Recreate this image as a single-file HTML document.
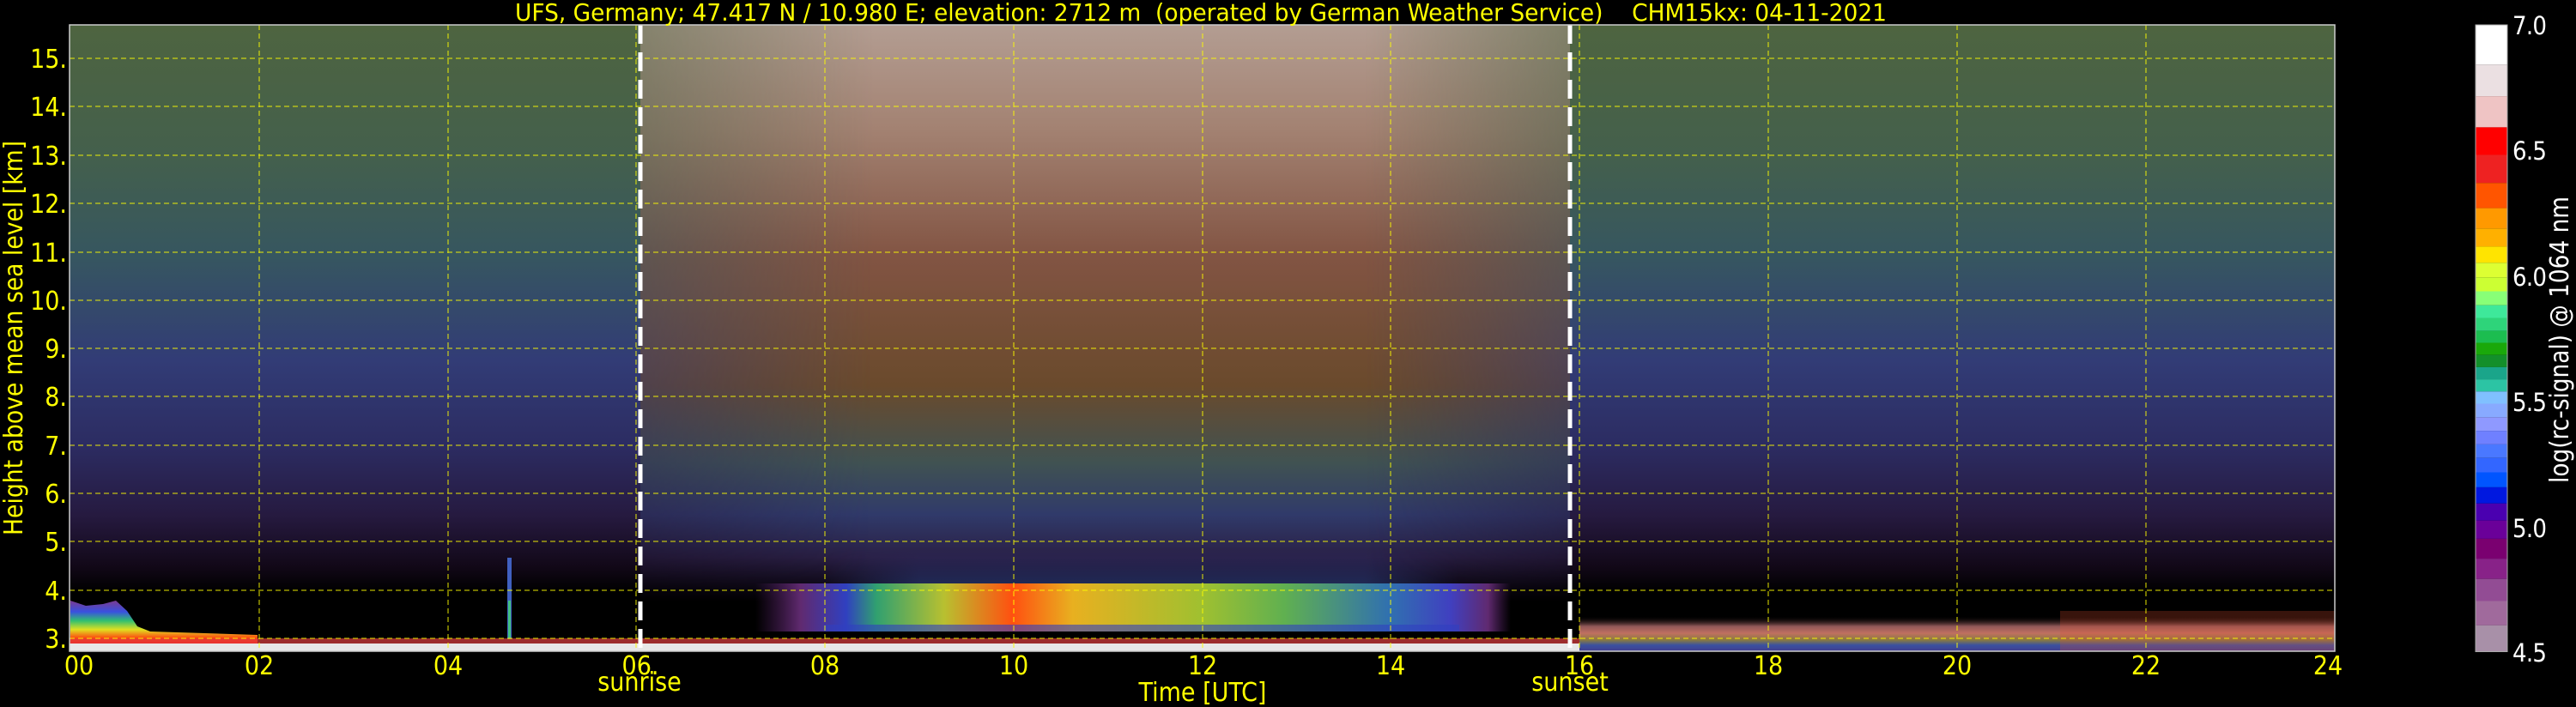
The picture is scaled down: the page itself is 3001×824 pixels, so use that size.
<!DOCTYPE html>
<html><head><meta charset="utf-8"><style>
html,body{margin:0;padding:0;background:#000;width:3001px;height:824px;overflow:hidden}
svg{display:block}
text{font-family:"DejaVu Sans Condensed","DejaVu Sans","Liberation Sans",sans-serif}
</style></head><body>
<svg width="3001" height="824" viewBox="0 0 3001 824" xmlns="http://www.w3.org/2000/svg">
<defs>
<linearGradient id="night" x1="0" y1="29" x2="0" y2="759" gradientUnits="userSpaceOnUse">
<stop offset="0" stop-color="#4e6440"/>
<stop offset="0.207" stop-color="#44604c"/>
<stop offset="0.37" stop-color="#365660"/>
<stop offset="0.535" stop-color="#323c76"/>
<stop offset="0.672" stop-color="#2c2c62"/>
<stop offset="0.782" stop-color="#261a40"/>
<stop offset="0.864" stop-color="#120818"/>
<stop offset="0.905" stop-color="#000"/>
<stop offset="1" stop-color="#000"/>
</linearGradient>
<linearGradient id="day" x1="0" y1="29" x2="0" y2="759" gradientUnits="userSpaceOnUse">
<stop offset="0" stop-color="#b39d92"/>
<stop offset="0.166" stop-color="#a38272"/>
<stop offset="0.37" stop-color="#825443"/>
<stop offset="0.576" stop-color="#6a4a2c"/>
<stop offset="0.70" stop-color="#405252"/>
<stop offset="0.782" stop-color="#303a6a"/>
<stop offset="0.85" stop-color="#2a2045"/>
<stop offset="0.905" stop-color="#0a0510"/>
<stop offset="0.92" stop-color="#000"/>
<stop offset="1" stop-color="#000"/>
</linearGradient>
<linearGradient id="dayMaskG" x1="746" y1="0" x2="1829" y2="0" gradientUnits="userSpaceOnUse">
<stop offset="0" stop-color="#fff" stop-opacity="0.55"/>
<stop offset="0.25" stop-color="#fff" stop-opacity="1"/>
<stop offset="0.78" stop-color="#fff" stop-opacity="1"/>
<stop offset="1" stop-color="#fff" stop-opacity="0.5"/>
</linearGradient>
<mask id="dayMask"><rect x="746" y="29" width="1083" height="730" fill="url(#dayMaskG)"/></mask>
<linearGradient id="bl" x1="880" y1="0" x2="1760" y2="0" gradientUnits="userSpaceOnUse">
<stop offset="0" stop-color="#502060" stop-opacity="0"/>
<stop offset="0.06" stop-color="#602a70"/>
<stop offset="0.12" stop-color="#3040c0"/>
<stop offset="0.16" stop-color="#30a070"/>
<stop offset="0.25" stop-color="#b8c030"/>
<stop offset="0.34" stop-color="#ff5010"/>
<stop offset="0.42" stop-color="#e8b020"/>
<stop offset="0.59" stop-color="#a0c030"/>
<stop offset="0.70" stop-color="#60b050"/>
<stop offset="0.84" stop-color="#3070b0"/>
<stop offset="0.92" stop-color="#4040c0"/>
<stop offset="0.97" stop-color="#602a70"/>
<stop offset="1" stop-color="#502060" stop-opacity="0"/>
</linearGradient>
<linearGradient id="blTop" x1="0" y1="640" x2="0" y2="690" gradientUnits="userSpaceOnUse">
<stop offset="0" stop-color="#3040a0" stop-opacity="0"/>
<stop offset="1" stop-color="#3a60b0" stop-opacity="0.8"/>
</linearGradient>
<linearGradient id="blTopH" x1="960" y1="0" x2="1700" y2="0" gradientUnits="userSpaceOnUse">
<stop offset="0" stop-color="#fff" stop-opacity="0"/>
<stop offset="0.15" stop-color="#fff" stop-opacity="1"/>
<stop offset="0.85" stop-color="#fff" stop-opacity="1"/>
<stop offset="1" stop-color="#fff" stop-opacity="0"/>
</linearGradient>
<mask id="blMask"><rect x="960" y="640" width="740" height="52" fill="url(#blTopH)"/></mask>
<linearGradient id="eve" x1="0" y1="718" x2="0" y2="758" gradientUnits="userSpaceOnUse">
<stop offset="0" stop-color="#000" stop-opacity="0"/>
<stop offset="0.3" stop-color="#905858"/>
<stop offset="0.5" stop-color="#c07060"/>
<stop offset="0.7" stop-color="#8a7a40"/>
<stop offset="0.85" stop-color="#3a50a0"/>
<stop offset="1" stop-color="#404090"/>
</linearGradient>
<linearGradient id="bump" x1="0" y1="700" x2="0" y2="752" gradientUnits="userSpaceOnUse">
<stop offset="0" stop-color="#7a3a90"/>
<stop offset="0.25" stop-color="#3a50e0"/>
<stop offset="0.45" stop-color="#30c070"/>
<stop offset="0.65" stop-color="#e0e020"/>
<stop offset="0.85" stop-color="#ff4010"/>
<stop offset="1" stop-color="#ff0000"/>
</linearGradient>
</defs>

<rect x="81" y="29" width="2639" height="730" fill="url(#night)"/>
<rect x="746" y="29" width="1083" height="730" fill="url(#day)" mask="url(#dayMask)"/>

<rect x="960" y="640" width="740" height="52" fill="url(#blTop)" opacity="0.6" mask="url(#blMask)"/>
<rect x="880" y="680" width="880" height="56" fill="url(#bl)"/>
<rect x="960" y="728" width="740" height="8" fill="#3040c0" opacity="0.6"/>

<path d="M82,700 L100,706 L120,704 L135,700 L148,712 L160,730 L175,736 L300,740 L300,752 L82,752 Z" fill="url(#bump)"/>
<rect x="591" y="650" width="5" height="95" fill="#4060c0"/>
<rect x="592" y="700" width="3" height="45" fill="#40c080"/>

<rect x="81" y="744" width="1760" height="6" fill="#e04040" opacity="0.7"/>
<rect x="81" y="750" width="1760" height="9" fill="#e8e8e8"/>
<rect x="1840" y="718" width="880" height="41" fill="url(#eve)"/>
<rect x="2400" y="712" width="320" height="47" fill="#e05030" opacity="0.25"/>

<g stroke="#ffff00" stroke-width="1" stroke-dasharray="6,4" fill="none" opacity="0.9">
<line x1="81" y1="68" x2="2720" y2="68"/>
<line x1="81" y1="124" x2="2720" y2="124"/>
<line x1="81" y1="181" x2="2720" y2="181"/>
<line x1="81" y1="237" x2="2720" y2="237"/>
<line x1="81" y1="294" x2="2720" y2="294"/>
<line x1="81" y1="350" x2="2720" y2="350"/>
<line x1="81" y1="406" x2="2720" y2="406"/>
<line x1="81" y1="462" x2="2720" y2="462"/>
<line x1="81" y1="519" x2="2720" y2="519"/>
<line x1="81" y1="575" x2="2720" y2="575"/>
<line x1="81" y1="631" x2="2720" y2="631"/>
<line x1="81" y1="688" x2="2720" y2="688"/>
<line x1="81" y1="744" x2="2720" y2="744"/>
<line x1="302" y1="29" x2="302" y2="759"/>
<line x1="522" y1="29" x2="522" y2="759"/>
<line x1="741" y1="29" x2="741" y2="759"/>
<line x1="961" y1="29" x2="961" y2="759"/>
<line x1="1181" y1="29" x2="1181" y2="759"/>
<line x1="1401" y1="29" x2="1401" y2="759"/>
<line x1="1620" y1="29" x2="1620" y2="759"/>
<line x1="1840" y1="29" x2="1840" y2="759"/>
<line x1="2060" y1="29" x2="2060" y2="759"/>
<line x1="2280" y1="29" x2="2280" y2="759"/>
<line x1="2500" y1="29" x2="2500" y2="759"/>
</g>
<g stroke="#ffffff" stroke-width="5" stroke-dasharray="22,10">
<line x1="746" y1="29" x2="746" y2="759"/>
<line x1="1829" y1="29" x2="1829" y2="759"/>
</g>
<rect x="81" y="29" width="2639" height="730" fill="none" stroke="#cccccc" stroke-width="1.5"/>

<text x="600" y="24" font-size="28" fill="#ffff00" textLength="1598" lengthAdjust="spacingAndGlyphs" xml:space="preserve">UFS, Germany; 47.417 N / 10.980 E; elevation: 2712 m  (operated by German Weather Service)    CHM15kx: 04-11-2021</text>

<g font-size="30" fill="#ffff00" text-anchor="end">
<text x="78" y="79">15.</text><text x="78" y="135">14.</text><text x="78" y="192">13.</text>
<text x="78" y="248">12.</text><text x="78" y="305">11.</text><text x="78" y="361">10.</text>
<text x="78" y="417">9.</text><text x="78" y="473">8.</text><text x="78" y="530">7.</text>
<text x="78" y="586">6.</text><text x="78" y="642">5.</text><text x="78" y="699">4.</text>
<text x="78" y="755">3.</text>
</g>
<text transform="translate(26,394) rotate(-90)" font-size="30" fill="#ffff00" text-anchor="middle" textLength="460" lengthAdjust="spacingAndGlyphs">Height above mean sea level [km]</text>

<g font-size="30" fill="#ffff00" text-anchor="middle">
<text x="92" y="786">00</text><text x="302" y="786">02</text><text x="522" y="786">04</text>
<text x="746" y="786">06.</text><text x="961" y="786">08</text><text x="1181" y="786">10</text>
<text x="1401" y="786">12</text><text x="1620" y="786">14</text><text x="1840" y="786">16</text>
<text x="2060" y="786">18</text><text x="2280" y="786">20</text><text x="2500" y="786">22</text>
<text x="2712" y="786">24</text>
<text x="745" y="805">sunrise</text>
<text x="1829" y="805">sunset</text>
<text x="1401" y="817">Time [UTC]</text>
</g>

<g>
<rect x="2884" y="29" width="37" height="46.3" fill="#ffffff"/>
<rect x="2884" y="75.3" width="37" height="36.8" fill="#ebe0e2"/>
<rect x="2884" y="112.1" width="37" height="36.3" fill="#efc4c4"/>
<rect x="2884" y="148.4" width="37" height="32.1" fill="#ff0000"/>
<rect x="2884" y="180.5" width="37" height="32.7" fill="#ee2222"/>
<rect x="2884" y="213.2" width="37" height="29.4" fill="#ff5500"/>
<rect x="2884" y="242.6" width="37" height="23.7" fill="#ff9900"/>
<rect x="2884" y="266.3" width="37" height="21.1" fill="#ffb000"/>
<rect x="2884" y="287.4" width="37" height="18.9" fill="#ffe400"/>
<rect x="2884" y="306.3" width="37" height="16.9" fill="#ddff33"/>
<rect x="2884" y="323.2" width="37" height="16.3" fill="#ccff33"/>
<rect x="2884" y="339.5" width="37" height="16.3" fill="#88ff77"/>
<rect x="2884" y="355.8" width="37" height="14.7" fill="#3ee89a"/>
<rect x="2884" y="370.5" width="37" height="15.3" fill="#2ed47a"/>
<rect x="2884" y="385.8" width="37" height="13.7" fill="#1cbd50"/>
<rect x="2884" y="399.5" width="37" height="14.2" fill="#1aa80a"/>
<rect x="2884" y="413.7" width="37" height="14.2" fill="#138f2a"/>
<rect x="2884" y="427.9" width="37" height="14.2" fill="#1aa58a"/>
<rect x="2884" y="442.1" width="37" height="14.2" fill="#2cc4a4"/>
<rect x="2884" y="456.3" width="37" height="14.2" fill="#80c0ff"/>
<rect x="2884" y="470.5" width="37" height="15.8" fill="#88aaff"/>
<rect x="2884" y="486.3" width="37" height="15.8" fill="#8f99ff"/>
<rect x="2884" y="502.1" width="37" height="15.8" fill="#6f80ff"/>
<rect x="2884" y="517.9" width="37" height="15.8" fill="#4a78ff"/>
<rect x="2884" y="533.7" width="37" height="16.8" fill="#3366ff"/>
<rect x="2884" y="550.5" width="37" height="17.4" fill="#0055ff"/>
<rect x="2884" y="567.9" width="37" height="18.9" fill="#0018e0"/>
<rect x="2884" y="586.8" width="37" height="20" fill="#4a00b0"/>
<rect x="2884" y="606.8" width="37" height="21.1" fill="#6a0099"/>
<rect x="2884" y="627.9" width="37" height="23.2" fill="#7a0070"/>
<rect x="2884" y="651.1" width="37" height="23.6" fill="#882288"/>
<rect x="2884" y="674.7" width="37" height="25.8" fill="#924c94"/>
<rect x="2884" y="700.5" width="37" height="28.4" fill="#a06a9c"/>
<rect x="2884" y="728.9" width="37" height="30.6" fill="#a890a8"/>
<rect x="2884" y="29" width="37" height="730.5" fill="none" stroke="#aaaaaa" stroke-width="1"/>
</g>
<g font-size="29" fill="#ffffff">
<text x="2927" y="40" textLength="40" lengthAdjust="spacing">7.0</text>
<text x="2927" y="186" textLength="40" lengthAdjust="spacing">6.5</text>
<text x="2927" y="333" textLength="40" lengthAdjust="spacing">6.0</text>
<text x="2927" y="479" textLength="40" lengthAdjust="spacing">5.5</text>
<text x="2927" y="626" textLength="40" lengthAdjust="spacing">5.0</text>
<text x="2927" y="771" textLength="40" lengthAdjust="spacing">4.5</text>
</g>
<text transform="translate(2992,396) rotate(-90)" font-size="30" fill="#ffffff" text-anchor="middle" textLength="334" lengthAdjust="spacingAndGlyphs">log(rc-signal) @ 1064 nm</text>
</svg>
</body></html>
